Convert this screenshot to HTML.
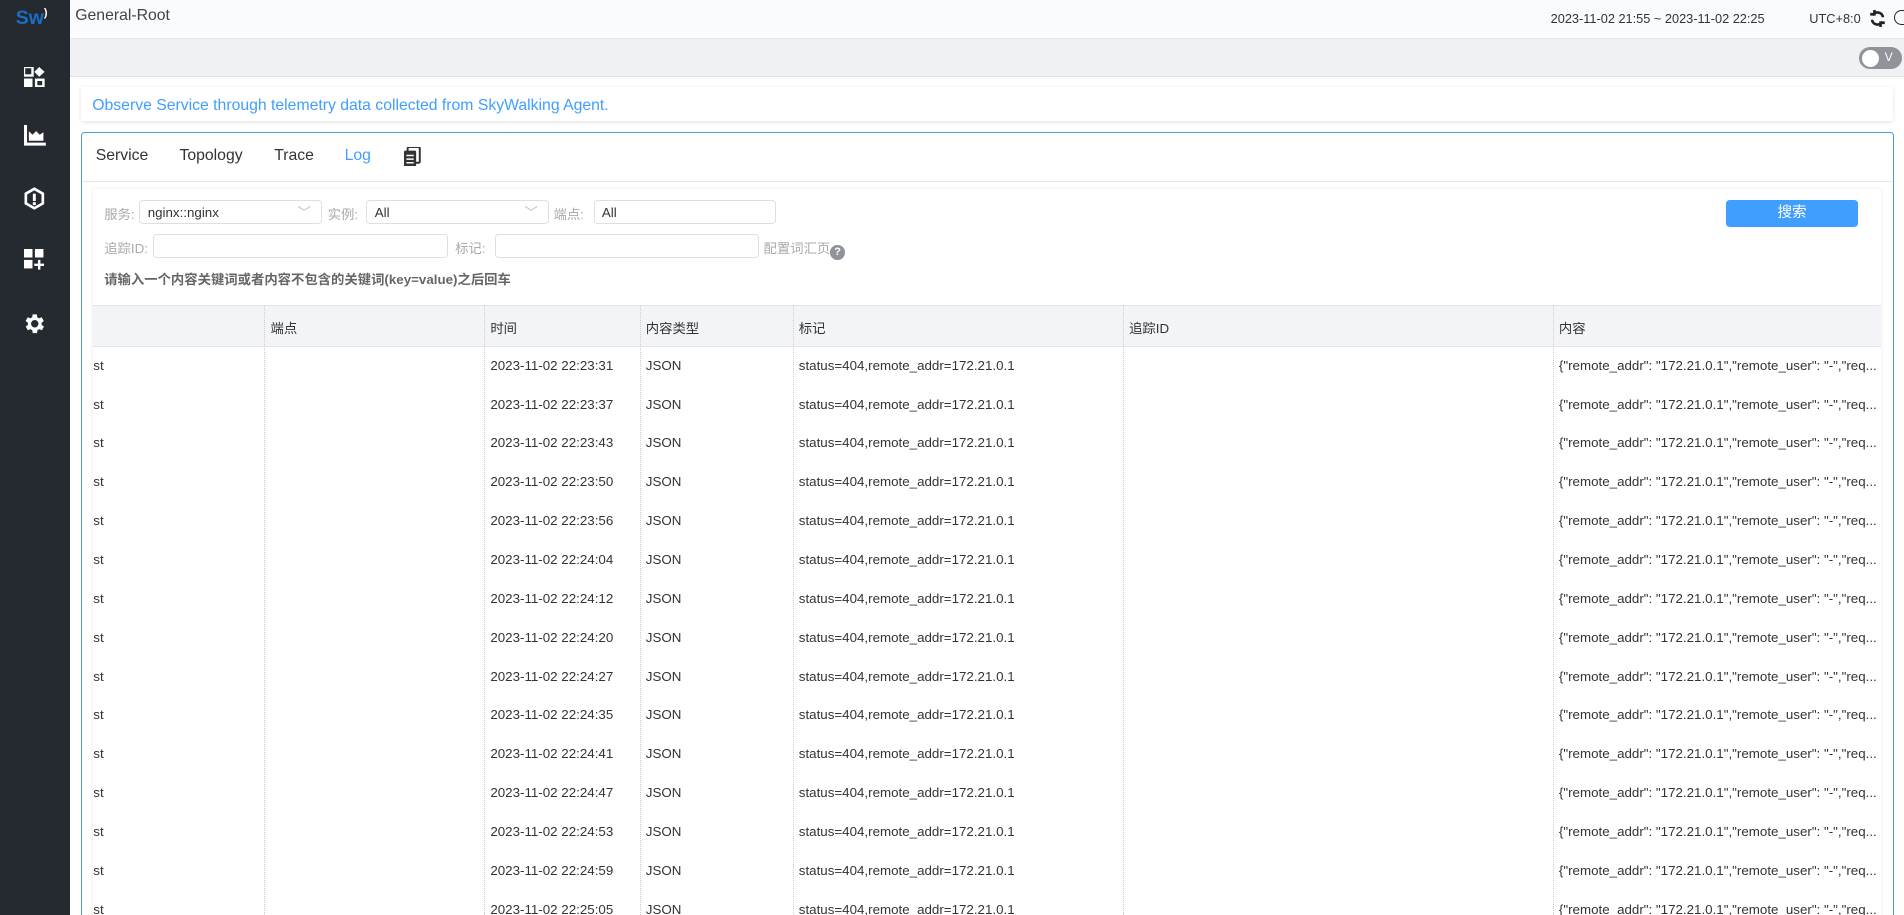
<!DOCTYPE html>
<html><head><meta charset="utf-8">
<style>
html,body{margin:0;padding:0;overflow:hidden}
body{width:1904px;height:915px;background:#fff;font-family:"Liberation Sans","Noto Sans CJK SC",sans-serif;}
#w{zoom:1.2143;width:1568px;height:754px;position:relative;overflow:hidden;background:#fff}
.a{position:absolute}
.side{left:0;top:0;width:58px;height:754px;background:#252a30}
.hdr{left:58px;top:0;width:1510px;height:31px;background:#fafbfc;border-bottom:1px solid #e6e8eb}
.gray{left:58px;top:32px;width:1510px;height:31px;background:#f0f1f3;border-bottom:1px solid #dfe2e6}
.t{font-size:11px;color:#333;white-space:nowrap}
.lab{font-size:11px;color:#aaa;white-space:nowrap}
.inp{border:1px solid #dcdfe6;border-radius:3px;background:#fff;height:20px;box-sizing:border-box;font-size:11px;color:#333;padding:3px 6px}
.vl{position:absolute;top:0;width:0;border-left:1px dotted #ccc}
</style></head><body><div id="w">
<div class="a side">
 <div class="a" style="left:13px;top:6px;font-size:16px;font-weight:bold;color:#1a6fc4">Sw<span style="font-size:9px;color:#fff;vertical-align:top">)</span></div>
 <svg class="a" style="left:20px;top:55px" width="17" height="17" viewBox="0 0 17 17" fill="#fff"><rect x="0" y="0" width="7" height="7" fill="none" stroke="#fff" stroke-width="2"/><path d="M12.5 0L17 4 12.5 8 8.5 4Z"/><rect x="0" y="9.5" width="7" height="7"/><rect x="10" y="10.5" width="6" height="5.5" fill="none" stroke="#fff" stroke-width="2"/></svg>
 <svg class="a" style="left:20px;top:103px" width="18" height="17" viewBox="0 0 18 17" fill="#fff"><path d="M0 0h2.5v14.5H18V17H0Z"/><path d="M4 13V5l3 3 3-3 3 3 3-2v7Z"/></svg>
 <svg class="a" style="left:20px;top:154px" width="17" height="19" viewBox="0 0 17 19"><path d="M8.5 1.5L15.5 5.5v8l-7 4-7-4v-8Z" fill="none" stroke="#fff" stroke-width="2.2"/><rect x="7.3" y="5.5" width="2.4" height="6" fill="#fff"/><rect x="7.3" y="12.5" width="2.4" height="2.4" fill="#fff"/></svg>
 <svg class="a" style="left:20px;top:205px" width="17" height="17" viewBox="0 0 17 17" fill="#fff"><rect x="0" y="0" width="7" height="7"/><rect x="9" y="0" width="7" height="7"/><rect x="0" y="9" width="7" height="7"/><path d="M11.5 9h2v3h3v2h-3v3h-2v-3h-3v-2h3Z"/></svg>
 <svg class="a" style="left:18px;top:256px" width="21" height="21" viewBox="0 0 24 24" fill="#fff"><path d="M19.4 13a7.5 7.5 0 000-2l2.1-1.6-2-3.5-2.5 1a7.6 7.6 0 00-1.7-1L15 3.2h-4l-.4 2.7a7.6 7.6 0 00-1.7 1l-2.5-1-2 3.5L6.6 11a7.5 7.5 0 000 2l-2.1 1.6 2 3.5 2.5-1a7.6 7.6 0 001.7 1l.4 2.7h4l.4-2.7a7.6 7.6 0 001.7-1l2.5 1 2-3.5ZM13 15.5a3.5 3.5 0 110-7 3.5 3.5 0 010 7z" transform="translate(-1 0)"/></svg>
</div>
<div class="a hdr">
 <div class="a" style="left:4px;top:6px;font-size:13px;color:#444">General-Root</div>
 <div class="a t" style="left:1219px;top:9px;font-size:10.5px">2023-11-02 21:55 ~ 2023-11-02 22:25</div>
 <div class="a t" style="left:1432px;top:9px;font-size:10.5px">UTC+8:0</div>
 <svg class="a" style="left:1481px;top:8px" width="14" height="14" viewBox="0 0 14 14" fill="none" stroke="#222" stroke-width="2.2"><path d="M2.5 8A4.5 4.5 0 0 0 11 9.5M11.5 6A4.5 4.5 0 0 0 3 4.5"/><path d="M1 3.5h3.5V0" /><path d="M13 10.5H9.5V14"/></svg>
 <div class="a" style="left:1502px;top:8px;width:11px;height:11px;border:1.5px solid #222;border-radius:50%"></div>
</div>
<div class="a gray">
 <div class="a" style="left:1473px;top:7px;width:35px;height:18px;border-radius:9px;background:#909399"><div style="position:absolute;left:2px;top:2px;width:14px;height:14px;border-radius:50%;background:#fff"></div><div style="position:absolute;left:21px;top:2px;font-size:10px;color:#fff">V</div></div>
</div>
<div class="a" style="left:67px;top:72px;width:1492px;height:28px;background:#fff;box-shadow:0 1px 3px rgba(0,0,0,.12)">
 <div class="a" style="left:9px;top:8px;font-size:13px;color:#409eff;white-space:nowrap">Observe Service through telemetry data collected from SkyWalking Agent.</div>
</div>
<div class="a" style="left:67px;top:109px;width:1491px;height:660px;border:1px solid #4a9be0;border-radius:3px;background:#fff">
 <div class="a" style="left:0;top:0;width:1491px;height:39px;border-bottom:1px solid #e8e8e8">
  <span class="a" style="left:11px;top:11px;font-size:13px;color:#333">Service</span>
  <span class="a" style="left:80px;top:11px;font-size:13px;color:#333">Topology</span>
  <span class="a" style="left:158px;top:11px;font-size:13px;color:#333">Trace</span>
  <span class="a" style="left:216px;top:11px;font-size:13px;color:#409eff">Log</span>
  <svg class="a" style="left:265px;top:11px" width="14" height="16" viewBox="0 0 14 16"><rect x="3" y="0" width="10" height="13" rx="1" fill="#fff" stroke="#333" stroke-width="1.6"/><rect x="0" y="3" width="10" height="13" rx="1" fill="#333"/><path d="M2 7h6M2 10h6M2 13h6" stroke="#fff" stroke-width="1.2"/></svg>
 </div>
 <div class="a" style="left:9px;top:46px;width:1472px;height:620px;background:#fff;box-shadow:0 0 3px rgba(0,0,0,.1)">
  <span class="a lab" style="left:9px;top:12px">服务:</span>
  <div class="a inp" style="left:38px;top:9px;width:150px">nginx::nginx<span style="position:absolute;right:8px;top:1px;color:#bbb">﹀</span></div>
  <span class="a lab" style="left:193px;top:12px">实例:</span>
  <div class="a inp" style="left:225px;top:9px;width:150px">All<span style="position:absolute;right:8px;top:1px;color:#bbb">﹀</span></div>
  <span class="a lab" style="left:379px;top:12px">端点:</span>
  <div class="a inp" style="left:412px;top:9px;width:150px">All</div>
  <div class="a" style="left:1345px;top:9px;width:108px;height:22px;background:#409eff;border-radius:3px;color:#fff;font-size:12px;text-align:center;line-height:22px">搜索</div>
  <span class="a lab" style="left:9px;top:40px">追踪ID:</span>
  <div class="a inp" style="left:49px;top:37px;width:243px"></div>
  <span class="a lab" style="left:298px;top:40px">标记:</span>
  <div class="a inp" style="left:331px;top:37px;width:217px"></div>
  <span class="a lab" style="left:552px;top:40px">配置词汇页<span style="display:inline-block;width:12px;height:12px;border-radius:50%;background:#909399;color:#fff;font-size:9px;text-align:center;line-height:12px;font-weight:bold;vertical-align:-2px">?</span></span>
  <span class="a" style="left:9px;top:66px;font-size:11px;font-weight:bold;color:#666;white-space:nowrap">请输入一个内容关键词或者内容不包含的关键词(key=value)之后回车</span>
  <div class="a" style="left:0;top:95px;width:1472px;height:530px;overflow:hidden;border-top:1px solid #e3e5e8">
   <div class="a" style="left:0;top:0;width:1472px;height:33px;background:#f3f4f7;border-bottom:1px solid #e3e5e8"></div>
   <div class="vl" style="left:141px;height:530px"></div><div class="vl" style="left:322px;height:530px"></div><div class="vl" style="left:450px;height:530px"></div><div class="vl" style="left:576px;height:530px"></div><div class="vl" style="left:848px;height:530px"></div><div class="vl" style="left:1202px;height:530px"></div>
   <span class="a t" style="left:146px;top:10px">端点</span><span class="a t" style="left:327px;top:10px">时间</span><span class="a t" style="left:455px;top:10px">内容类型</span><span class="a t" style="left:581px;top:10px">标记</span><span class="a t" style="left:853px;top:10px">追踪ID</span><span class="a t" style="left:1207px;top:10px">内容</span>
   <div id="rows"></div>
  </div>
 </div>
</div>
</div>
<script>
var ts=["22:23:31","22:23:37","22:23:43","22:23:50","22:23:56","22:24:04","22:24:12","22:24:20","22:24:27","22:24:35","22:24:41","22:24:47","22:24:53","22:24:59","22:25:05"];
var h="";
ts.forEach(function(t,i){var y=43+i*32;
h+='<span class="a t" style="left:0;top:'+y+'px">st</span><span class="a t" style="left:327px;top:'+y+'px">2023-11-02 '+t+'</span><span class="a t" style="left:455px;top:'+y+'px">JSON</span><span class="a t" style="left:581px;top:'+y+'px">status=404,remote_addr=172.21.0.1</span><span class="a t" style="left:1207px;top:'+y+'px">{"remote_addr": "172.21.0.1","remote_user": "-","req...</span>';});
document.getElementById("rows").innerHTML=h;
</script>
</body></html>
